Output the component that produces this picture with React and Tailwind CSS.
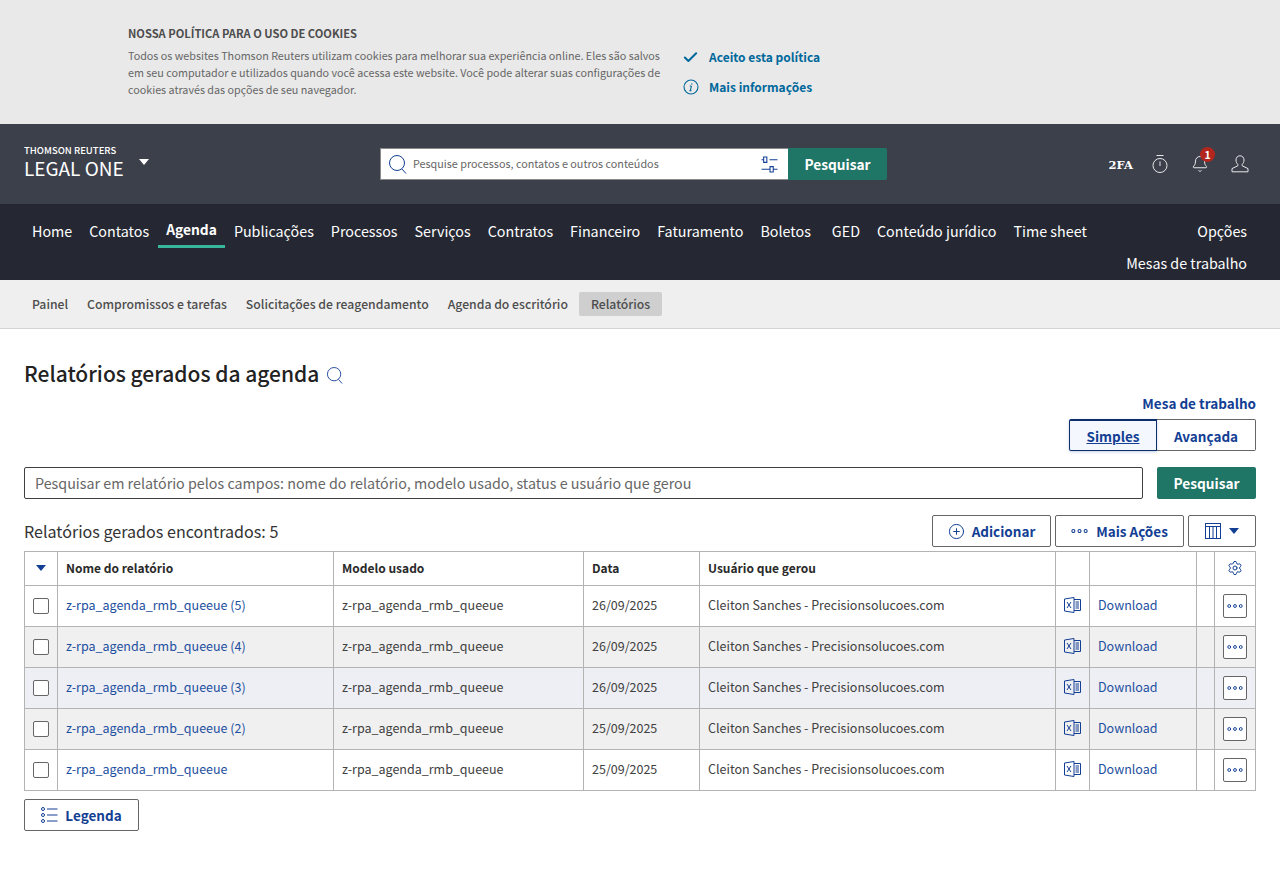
import { Check, Settings, CirclePlus, Bell } from "lucide-react";

const FONT = "font-['Noto_Sans_CJK_SC','Lato',sans-serif]";

const mainNav = [
  "Home",
  "Contatos",
  "Agenda",
  "Publicações",
  "Processos",
  "Serviços",
  "Contratos",
  "Financeiro",
  "Faturamento",
  "Boletos",
  "GED",
  "Conteúdo jurídico",
  "Time sheet",
];

const subNav = ["Painel", "Compromissos e tarefas", "Solicitações de reagendamento", "Agenda do escritório", "Relatórios"];

const rows = [
  { name: "z-rpa_agenda_rmb_queeue (5)", date: "26/09/2025", bg: "bg-white" },
  { name: "z-rpa_agenda_rmb_queeue (4)", date: "26/09/2025", bg: "bg-[#f0f0f0]" },
  { name: "z-rpa_agenda_rmb_queeue (3)", date: "26/09/2025", bg: "bg-[#eeeff4]" },
  { name: "z-rpa_agenda_rmb_queeue (2)", date: "25/09/2025", bg: "bg-[#f0f0f0]" },
  { name: "z-rpa_agenda_rmb_queeue", date: "25/09/2025", bg: "bg-white" },
];

const Dots = ({ className }) => (
  <svg viewBox="0 0 18 6" className={className} fill="none" stroke="currentColor" strokeWidth="1.1">
    <circle cx="2.5" cy="3" r="1.6" />
    <circle cx="9" cy="3" r="1.6" />
    <circle cx="15.5" cy="3" r="1.6" />
  </svg>
);

const SearchGlass = ({ className }) => (
  <svg viewBox="0 0 18 19" className={className} fill="none" stroke="currentColor" strokeWidth="1">
    <circle cx="8" cy="8" r="7.5" />
    <path d="M13 14L17 18.5" />
  </svg>
);

const FilterIcon = () => (
  <svg viewBox="0 0 16 16" className="w-[17px] h-[17px] text-[#123e94]" fill="none" stroke="currentColor" strokeWidth="1">
    <path d="M0.5 3.5H2.5M2.5 1h3v5h-3zM8 3.5H15.5" />
    <path d="M0.5 12.5H8.5M8.5 10h3v5h-3zM11.5 12.5H15.5" />
  </svg>
);

const InfoItalic = () => (
  <svg viewBox="0 0 16 16" className="w-[16px] h-[16px]" fill="none" stroke="currentColor" strokeWidth="1.1">
    <circle cx="8" cy="8" r="7" />
    <path d="M8.4 7L7.4 11.6M6.8 7H8.4M6.5 11.6H8.4" />
    <path d="M8.8 4.4V5.4" strokeWidth="1.4" />
  </svg>
);

const TimerIcon = () => (
  <svg viewBox="0 0 16 19" className="w-[16px] h-[19px] text-[#e8e8e8]" fill="none" stroke="currentColor" strokeWidth="1">
    <path d="M4.5 0.5H11.5" />
    <circle cx="8" cy="10.5" r="7" />
    <path d="M8 6.5V11" />
  </svg>
);

const UserIcon = () => (
  <svg viewBox="0 0 18 18" className="w-[18px] h-[18px] text-[#e8e8e8]" fill="none" stroke="currentColor" strokeWidth="1">
    <path d="M9 0.8C6.6 0.8 5 2.6 5 5C5 7 5.8 8.4 6.8 9.4V10.8L1 13.6V16.8H17V13.6L11.2 10.8V9.4C12.2 8.4 13 7 13 5C13 2.6 11.4 0.8 9 0.8Z" />
  </svg>
);

const ExcelIcon = () => (
  <svg viewBox="0 0 17 16" className="w-[17px] h-[16px] text-[#123e94]" fill="none" stroke="currentColor" strokeWidth="1">
    <path d="M0.5 2L10 0.5V15.5L0.5 14Z" />
    <path d="M10 2.5H16.5V13.5H10" />
    <path d="M3 5L7 11M7 5L3 11" />
    <path d="M11.5 5H15M11.5 7H15M11.5 9H15M11.5 11H15" />
  </svg>
);

const TableIcon = () => (
  <svg viewBox="0 0 16 16" className="w-[16px] h-[16px] text-[#123e94]" fill="none" stroke="currentColor" strokeWidth="1">
    <rect x="0.5" y="0.5" width="15" height="15" />
    <path d="M0.5 3.5H15.5M4.5 3.5V15.5M8 3.5V15.5M11.5 3.5V15.5" />
  </svg>
);

const LegendIcon = () => (
  <svg viewBox="0 0 17 16" className="w-[17px] h-[16px] text-[#123e94]" fill="none" stroke="currentColor" strokeWidth="1">
    <circle cx="2" cy="2" r="1.5" />
    <circle cx="2" cy="8" r="1.5" />
    <circle cx="2" cy="14" r="1.5" />
    <path d="M6 2H16.5M6 8H16.5M6 14H16.5" />
  </svg>
);

const Caret = ({ className }) => (
  <svg viewBox="0 0 10 6" className={className} fill="currentColor">
    <path d="M0 0H10L5 6Z" />
  </svg>
);

const OutlineButton = ({ children, className = "" }) => (
  <button className={`h-[32px] flex items-center justify-center border border-[#666] rounded-[2px] bg-white text-[#123e94] text-[13.5px] leading-[20px] font-semibold ${className}`}>
    {children}
  </button>
);

const Th = ({ children }) => (
  <th className="border border-[#b3b3b3] px-2 pb-[2px] text-left font-semibold text-[12px] text-[#2a2a2a]">{children}</th>
);

const Td = ({ children, color = "text-[#404040]", pad = "pb-[2px]" }) => (
  <td className={`border border-[#b3b3b3] px-2 text-[12.5px] ${pad} ${color}`}>{children}</td>
);

export default function App() {
  return (
    <div className={`min-h-[880px] bg-white ${FONT}`}>
      {/* Cookie banner */}
      <div className="h-[124px] bg-[#e9e9e9] pl-[128px] pt-[24px] flex">
        <div className="w-[540px]">
          <h2 className="text-[11.15px] leading-[18px] font-semibold text-[#4d4d4d]">NOSSA POLÍTICA PARA O USO DE COOKIES</h2>
          <p className="mt-[5px] w-[534px] text-[10.75px] leading-[17px] text-[#666]">
            Todos os websites Thomson Reuters utilizam cookies para melhorar sua experiência online. Eles são salvos em seu computador e utilizados quando você acessa este website. Você pode alterar suas configurações de cookies através das opções de seu navegador.
          </p>
        </div>
        <div className="ml-[14px] pt-[24px] flex flex-col gap-[12px] text-[12px] leading-[18px] font-semibold text-[#00689b]">
          <a className="flex items-center gap-[10px]">
            <Check size={17} strokeWidth={2} absoluteStrokeWidth />
            Aceito esta política
          </a>
          <a className="flex items-center gap-[10px] pl-px">
            <InfoItalic />
            Mais informações
          </a>
        </div>
      </div>

      {/* Top header */}
      <header className="h-[80px] bg-[#3c404b] flex items-center pl-[24px] pr-[31px] text-white">
        <div className="w-[356px] -mt-[4px] flex items-start">
          <div>
            <div className="text-[9.5px] leading-[12px] font-medium">THOMSON REUTERS</div>
            <div className="text-[19px] leading-[24px]">LEGAL ONE</div>
          </div>
          <Caret className="w-[10px] h-[6px] ml-[15px] mt-[15px] text-white" />
        </div>
        <div className="flex w-[507px] h-[32px]">
          <div className="flex-1 bg-white border border-[#8a8a8a] border-r-0 flex items-center pl-[8px] pr-[10px]">
            <SearchGlass className="w-[18px] h-[19px] text-[#123e94]" />
            <span className="ml-[6px] pb-[2px] flex-1 text-[10.8px] text-[#666]">Pesquise processos, contatos e outros conteúdos</span>
            <FilterIcon />
          </div>
          <button className="w-[99px] pt-px bg-[#1f7566] rounded-r-[2px] text-[13.7px] font-semibold">Pesquisar</button>
        </div>
        <div className="ml-auto flex items-center">
          <span className="font-['DejaVu_Serif',serif] font-bold text-[11.5px] mt-[3px]">2FA</span>
          <div className="ml-[19px]">
            <TimerIcon />
          </div>
          <div className="relative ml-[23px]">
            <Bell size={18} strokeWidth={1} absoluteStrokeWidth className="text-[#e8e8e8]" />
            <span className="absolute -top-[8px] left-[9px] w-[15px] h-[15px] rounded-full bg-[#b3261e] text-[10.5px] leading-[15px] text-center font-semibold">1</span>
          </div>
          <div className="ml-[22px]">
            <UserIcon />
          </div>
        </div>
      </header>

      {/* Main nav */}
      <nav className="h-[76px] bg-[#252833] pl-[24px] pr-[33px] flex justify-between text-white text-[14.3px] leading-[24px] whitespace-nowrap">
        <ul className="flex gap-px pt-[15px] h-fit">
          {mainNav.map((item) => (
            <li
              key={item}
              className={`px-2 ${item === "Agenda" ? "font-semibold text-[13.8px] border-b-[3px] border-[#37b79c] -mt-[2px] h-[31px]" : "h-[29px]"} ${item === "GED" ? "ml-[4px]" : ""}`}
            >
              {item}
            </li>
          ))}
        </ul>
        <div className="pt-[15px] flex flex-col items-end gap-[8px]">
          <span>Opções</span>
          <span>Mesas de trabalho</span>
        </div>
      </nav>

      {/* Sub nav */}
      <div className="h-[49px] bg-[#efefef] border-b border-[#d4d4d4] pl-[24px] pt-[12px] flex gap-[3px] text-[12.22px] font-medium leading-[24px] text-[#4d4d4d]">
        {subNav.map((item) => (
          <span key={item} className={`h-[24px] rounded-[2px] ${item === "Relatórios" ? "bg-[#cfcfcf] px-3" : "px-2"}`}>
            {item}
          </span>
        ))}
      </div>

      <main className="px-[24px]">
        <div className="pt-[28px] flex items-center">
          <h1 className="text-[21px] leading-[32px] mb-[2px] font-medium text-[#222]">Relatórios gerados da agenda</h1>
          <SearchGlass className="w-[16px] h-[17px] ml-[8px] mt-[3px] text-[#123e94]" />
        </div>

        <div className="flex flex-col items-end">
          <a className="text-[13.5px] leading-[24px] font-semibold text-[#123e94]">Mesa de trabalho</a>
          <div className="mt-[4px] flex h-[32px] text-[13.5px] font-semibold text-[#123e94]">
            <button className="w-[88px] pt-[2px] border border-[#0c2f6b] border-t-[2px] rounded-l-[2px] bg-[#f4f7fd] underline shadow-[0_1px_3px_rgba(18,62,148,0.25)]">Simples</button>
            <button className="w-[99px] pt-[2px] border border-l-0 border-[#666] rounded-r-[2px]">Avançada</button>
          </div>
        </div>

        <div className="mt-[16px] flex justify-between">
          <div className="w-[1119px] h-[32px] border border-[#404040] rounded-[2px] px-[10px] flex items-center text-[14.3px] text-[#666]">
            Pesquisar em relatório pelos campos: nome do relatório, modelo usado, status e usuário que gerou
          </div>
          <button className="w-[99px] h-[32px] pt-px bg-[#1f7566] rounded-[2px] text-white text-[13.7px] font-semibold">Pesquisar</button>
        </div>

        <div className="mt-[16px] flex items-center">
          <span className="text-[16.1px] text-[#333] leading-[32px]">Relatórios gerados encontrados: 5</span>
          <div className="ml-auto flex gap-[4px]">
            <OutlineButton className="w-[119px] gap-[7px]">
              <CirclePlus size={17} strokeWidth={1} absoluteStrokeWidth />
              Adicionar
            </OutlineButton>
            <OutlineButton className="w-[129px] gap-[8px]">
              <Dots className="w-[17px] h-[6px]" />
              Mais Ações
            </OutlineButton>
            <OutlineButton className="w-[68px] gap-[8px]">
              <TableIcon />
              <Caret className="w-[10px] h-[6px]" />
            </OutlineButton>
          </div>
        </div>

        <table className="mt-[4px] w-[1231px] table-fixed border-collapse">
          <colgroup>
            <col className="w-[33px]" />
            <col className="w-[276px]" />
            <col className="w-[250px]" />
            <col className="w-[116px]" />
            <col className="w-[356px]" />
            <col className="w-[34px]" />
            <col className="w-[107px]" />
            <col className="w-[18px]" />
            <col className="w-[41px]" />
          </colgroup>
          <thead>
            <tr className="h-[34px]">
              <Th>
                <Caret className="w-[10px] h-[6px] mx-auto text-[#123e94]" />
              </Th>
              <Th>Nome do relatório</Th>
              <Th>Modelo usado</Th>
              <Th>Data</Th>
              <Th>Usuário que gerou</Th>
              <Th />
              <Th />
              <Th />
              <Th>
                <Settings size={16} strokeWidth={1} absoluteStrokeWidth className="mx-auto text-[#123e94]" />
              </Th>
            </tr>
          </thead>
          <tbody>
            {rows.map((row) => (
              <tr key={row.name} className={`h-[41px] ${row.bg}`}>
                <Td pad="">
                  <span className="block w-[16px] h-[16px] border border-[#666] rounded-[2px] bg-white" />
                </Td>
                <Td color="text-[#1d4fa0]">{row.name}</Td>
                <Td>z-rpa_agenda_rmb_queeue</Td>
                <Td>{row.date}</Td>
                <Td>Cleiton Sanches - Precisionsolucoes.com</Td>
                <Td>
                  <ExcelIcon />
                </Td>
                <Td color="text-[#1d4fa0]">Download</Td>
                <Td />
                <Td pad="">
                  <span className="w-[24px] h-[24px] border border-[#666] rounded-[2px] bg-white flex items-center justify-center text-[#123e94]">
                    <Dots className="w-[16px] h-[6px]" />
                  </span>
                </Td>
              </tr>
            ))}
          </tbody>
        </table>

        <OutlineButton className="mt-[8px] w-[115px] gap-[7px]">
          <LegendIcon />
          Legenda
        </OutlineButton>
      </main>
    </div>
  );
}
